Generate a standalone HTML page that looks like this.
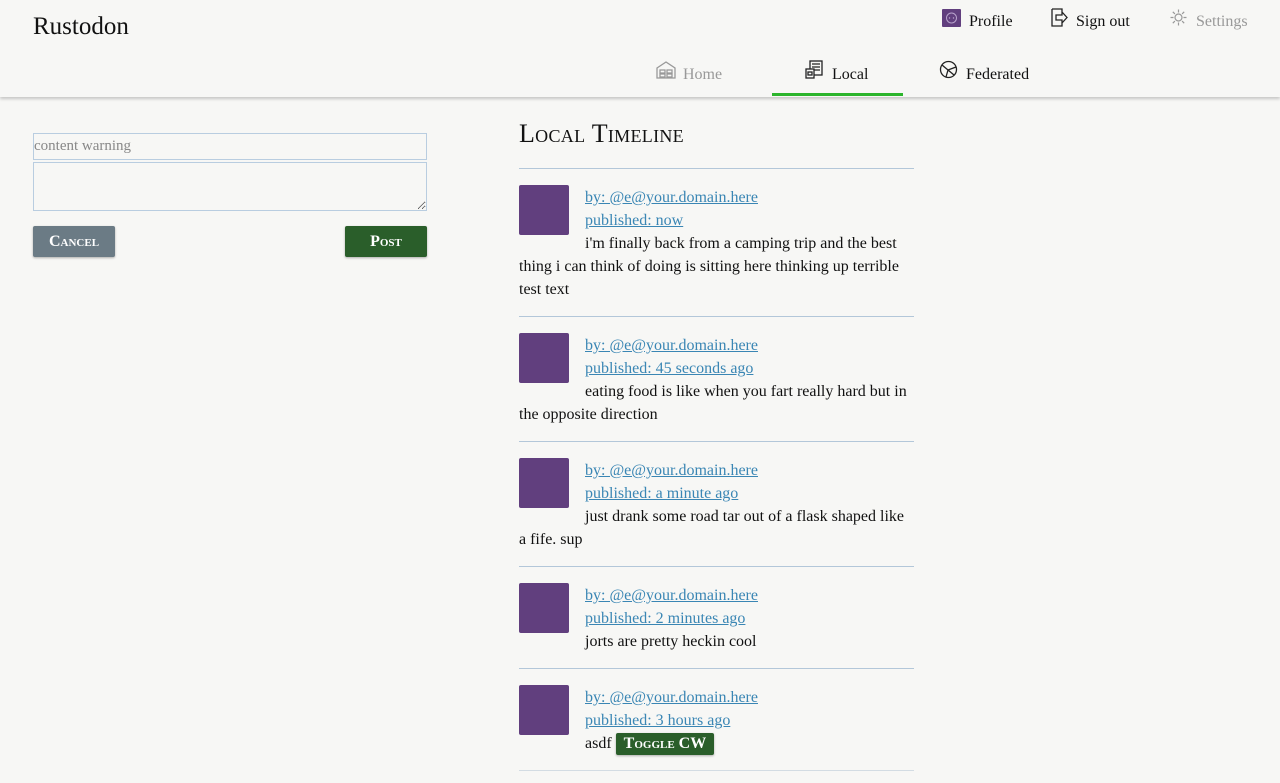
<!DOCTYPE html>
<html><head><meta charset="utf-8"><style>
*{box-sizing:border-box}
body{margin:0;width:1280px;height:783px;overflow:hidden;background:#f7f7f5;font-family:"Liberation Serif",serif;font-size:16px;color:#111;position:relative}
.hdr{position:absolute;left:0;top:0;width:1280px;height:97px;background:#f7f7f5;box-shadow:0 2px 3px rgba(0,0,0,.2)}
.abs{position:absolute}
.logo{left:33px;top:13px;font-size:25px}
.nav{font-size:16px;line-height:20px}
.ul{left:772px;top:93px;width:131px;height:3px;background:#2cb52c}
input,textarea{position:absolute;left:33px;width:394px;border:1px solid #b9cde0;background:#f7f7f5;font-family:"Liberation Serif",serif;font-size:15px;padding:0;margin:0}
.btn{position:absolute;top:226px;height:31px;color:#fff;font-weight:bold;font-variant:small-caps;font-size:16px;text-align:center;line-height:31px;border-radius:2px;box-shadow:0 1px 2px rgba(0,0,0,.3)}
h1{position:absolute;left:519px;top:119px;margin:0;font-weight:normal;font-variant:small-caps;font-size:26px;letter-spacing:.3px}
.hr{position:absolute;left:519px;width:395px;height:1px;background:#b3c7d9}
.post{position:absolute;left:519px;width:395px;line-height:23px;padding-top:1px}
.av{float:left;width:50px;height:50px;background:#613f7e;border-radius:2px;margin:-1px 16px 0 0}
a{color:#3a86b4;text-decoration:underline}
.cw{display:inline-block;background:#2a5e2a;color:#fff;font-weight:bold;font-variant:small-caps;padding:0 8px;line-height:22px;border-radius:2px;margin-left:0;box-shadow:0 1px 2px rgba(0,0,0,.3)}
</style></head><body>
<div class="hdr"></div>
<div class="abs logo">Rustodon</div>

<svg class="abs" style="left:942px;top:9px" width="19" height="18"><rect width="19" height="18" rx="1" fill="#613f7e"/><circle cx="9.5" cy="9" r="5" fill="none" stroke="#b8a3cc" stroke-width="1"/><circle cx="7.5" cy="9" r=".7" fill="#b8a3cc"/><circle cx="11.5" cy="9" r=".7" fill="#b8a3cc"/></svg>
<div class="abs nav" style="left:969px;top:12px">Profile</div>
<svg class="abs" style="left:1050px;top:8px" width="19" height="19" fill="none" stroke="#222" stroke-width="1.3"><path d="M2 1h10v4M12 14v4H2V1M6 7h6V4l5 5.5-5 5.5v-3H6z"/></svg>
<div class="abs nav" style="left:1076px;top:12px">Sign out</div>
<svg class="abs" style="left:1169px;top:8px" width="19" height="19" fill="none" stroke="#999" stroke-width="1.2"><circle cx="9.5" cy="9.5" r="3.5"/><path d="M9.5 1.5v3M9.5 14.5v3M1.5 9.5h3M14.5 9.5h3M3.8 3.8l2.1 2.1M13.1 13.1l2.1 2.1M3.8 15.2l2.1-2.1M13.1 5.9l2.1-2.1"/></svg>
<div class="abs nav" style="left:1196px;top:12px;color:#999">Settings</div>

<svg class="abs" style="left:656px;top:61px" width="20" height="18" fill="none" stroke="#999" stroke-width="1.3"><path d="M1 7L10 1l9 6v10H1z"/><rect x="4" y="9" width="5" height="3"/><rect x="11" y="9" width="5" height="3"/><rect x="4" y="13" width="5" height="3"/><rect x="11" y="13" width="5" height="3"/></svg>
<div class="abs nav" style="left:683px;top:65px;color:#999">Home</div>
<svg class="abs" style="left:805px;top:60px" width="19" height="19" fill="none" stroke="#222" stroke-width="1.3"><rect x="5" y="1" width="12" height="14"/><path d="M7 4h8M7 7h8M7 10h8"/><rect x="1" y="9" width="8" height="9" fill="#f7f7f5"/><rect x="3" y="12" width="4" height="3"/></svg>
<div class="abs nav" style="left:832px;top:65px">Local</div>
<svg class="abs" style="left:939px;top:60px" width="19" height="19" fill="none" stroke="#222" stroke-width="1.3"><circle cx="9.5" cy="9.5" r="8"/><path d="M3 5l6 5 8-3M9 10l-2 7M9 10l6 5"/></svg>
<div class="abs nav" style="left:966px;top:65px">Federated</div>
<div class="abs ul"></div>

<input style="top:133px;height:27px;color:#888" value="content warning">
<textarea style="top:162px;height:49px"></textarea>
<div class="btn" style="left:33px;width:82px;background:#6b7b85">Cancel</div>
<div class="btn" style="left:345px;width:82px;background:#2a5e2a">Post</div>

<h1>Local Timeline</h1>
<div class="hr" style="top:168px"></div>
<div class="post" style="top:185px"><div class="av"></div><a>by: @e@your.domain.here</a><br><a>published: now</a><br>i'm finally back from a camping trip and the best thing i can think of doing is sitting here thinking up terrible test text</div>
<div class="hr" style="top:316px"></div>
<div class="post" style="top:333px"><div class="av"></div><a>by: @e@your.domain.here</a><br><a>published: 45 seconds ago</a><br>eating food is like when you fart really hard but in the opposite direction</div>
<div class="hr" style="top:441px"></div>
<div class="post" style="top:458px"><div class="av"></div><a>by: @e@your.domain.here</a><br><a>published: a minute ago</a><br>just drank some road tar out of a flask shaped like a fife. sup</div>
<div class="hr" style="top:566px"></div>
<div class="post" style="top:583px"><div class="av"></div><a>by: @e@your.domain.here</a><br><a>published: 2 minutes ago</a><br>jorts are pretty heckin cool</div>
<div class="hr" style="top:668px"></div>
<div class="post" style="top:685px"><div class="av"></div><a>by: @e@your.domain.here</a><br><a>published: 3 hours ago</a><br>asdf <span class="cw">Toggle CW</span></div>
<div class="hr" style="top:770px;background:#d3dce3"></div>
</body></html>
